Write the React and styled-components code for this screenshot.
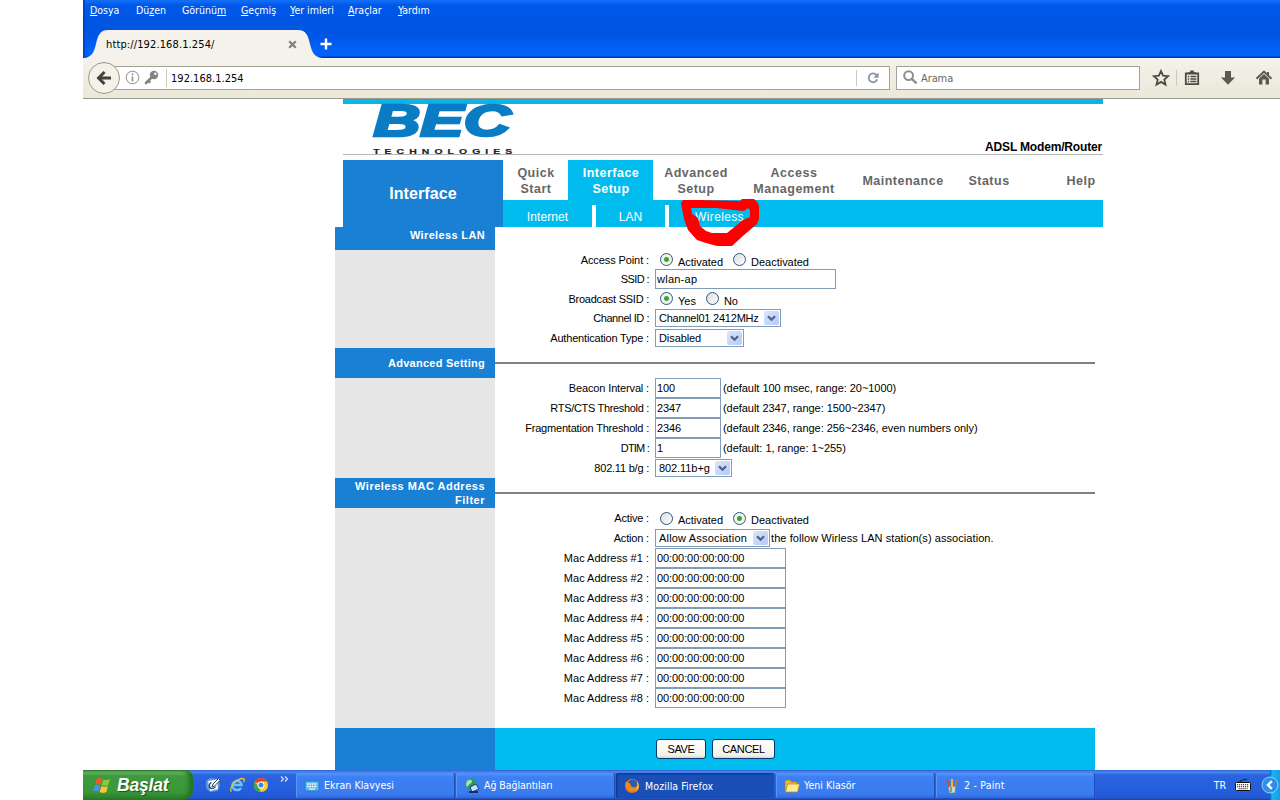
import React from 'react';
import styled, { createGlobalStyle } from 'styled-components';

const GlobalStyle = createGlobalStyle`
  * {
    box-sizing: border-box;
  }
  body {
    margin: 0;
    background: white;
    overflow: hidden;
  }
`;

const uiFont = '"DejaVu Sans Condensed", "DejaVu Sans", sans-serif';
const pageFont = '"Liberation Sans", Arial, sans-serif';

const Screen = styled.div`
  display: flex;
  flex-direction: column;
  width: 1197px;
  height: 800px;
  margin-left: 83px;
  overflow: hidden;
  font-family: ${pageFont};
  font-size: 11px;
  color: black;
`;

/* ---------- browser ---------- */

const TitleArea = styled.div`
  height: 58px;
  background: linear-gradient(to bottom, #1673fb 0, #0058ea 5px, #0055e3 22px, #0055e5 36px, #0064fb 52px, #0062f8 56px, #0037b0 57px, #0037b0 58px);
  box-shadow: inset 2px 0 1px #0046cc;
`;

const MenuBar = styled.div`
  display: flex;
  height: 30px;
  padding: 2px 0 0 7px;
`;

const MenuItem = styled.span`
  width: ${({ width }) => width}px;
  font-family: ${uiFont};
  font-size: 10.5px;
  line-height: 17px;
  letter-spacing: 0;
  color: white;
  white-space: nowrap;
  u {
    text-underline-offset: 1px;
  }
`;

const TabStrip = styled.div`
  display: flex;
  height: 28px;
  padding-left: 1px;
`;

const TabCurve = styled.svg`
  width: 24px;
  height: 28px;
  flex: none;
  transform: ${({ $flip }) => ($flip ? 'scaleX(-1)' : 'none')};
`;

const Tab = styled.div`
  display: flex;
  justify-content: space-between;
  align-items: center;
  width: 190px;
  height: 28px;
  background: #f4f2ea;
  font-family: ${uiFont};
  font-size: 11px;
  svg {
    flex: none;
    margin-right: 1px;
  }
`;

const TabTitle = styled.span`
  margin-left: -2px;
  letter-spacing: 0.12px;
`;

const NewTab = styled.div`
  display: flex;
  align-items: center;
  margin-left: -2px;
`;

const Toolbar = styled.div`
  display: flex;
  align-items: center;
  height: 41px;
  padding: 0 0 1px 5px;
  background: linear-gradient(to bottom, #f4f2ea, #ebe8d9);
  border-bottom: 1px solid #9c9a8c;
`;

const BackButton = styled.div`
  display: flex;
  align-items: center;
  justify-content: center;
  width: 32px;
  height: 32px;
  flex: none;
  border: 1px solid #9c998c;
  border-radius: 50%;
  background: #f3f1e8;
  z-index: 1;
`;

const Field = styled.div`
  display: flex;
  align-items: center;
  width: ${({ width }) => width}px;
  height: 24px;
  border: 1px solid #a5a395;
  background: white;
  font-family: ${uiFont};
  font-size: 11px;
`;

const AddressField = styled(Field)`
  margin-left: -8px;
  padding-left: 13px;
  border-left: none;
`;

const SearchField = styled(Field)`
  margin-left: 6px;
  padding-left: 6px;
  color: #666;
`;

const Divider = styled.span`
  width: 1px;
  height: ${({ height }) => height || 18}px;
  background: #ccc9bd;
`;

const AddressDivider = styled(Divider)`
  margin-left: 7px;
`;

const KeyIcon = styled.svg`
  width: 16px;
  height: 16px;
  margin-left: 3px;
`;

const AddressText = styled.span`
  flex: 1;
  margin-left: 4px;
  padding-top: 2px;
  letter-spacing: 0.02px;
`;

const ReloadIcon = styled.svg`
  width: 12px;
  height: 12px;
  margin: 0 10px;
`;

const SearchHint = styled.span`
  margin-left: 3px;
  padding-top: 2px;
  letter-spacing: -0.1px;
`;

const ToolIcons = styled.div`
  display: flex;
  align-items: center;
  margin-left: 12px;
`;

const ToolIcon = styled.svg`
  width: 18px;
  height: 18px;
  flex: none;
  margin-left: ${({ $gap }) => $gap || 0}px;
`;

const StarDivider = styled(Divider)`
  margin-left: 6px;
`;

/* ---------- router page ---------- */

const Page = styled.main`
  position: relative;
  height: 671px;
`;

const Banner = styled.div`
  display: flex;
  justify-content: space-between;
  align-items: flex-end;
  width: 760px;
  height: 56px;
  margin-left: 260px;
  border-top: 5px solid #0ab4e6;
  border-bottom: 1px solid #b5b5b5;
`;

const Logo = styled.svg`
  width: 150px;
  height: 51px;
  margin: 0 0 -1px 26px;
  overflow: visible;
`;

const Model = styled.div`
  padding: 0 1px 0 0;
  font-size: 12px;
  font-weight: bold;
  letter-spacing: -0.17px;
`;

const Navigation = styled.div`
  display: flex;
  width: 760px;
  height: 67px;
  margin: 5px 0 0 260px;
`;

const PageTitle = styled.div`
  width: 160px;
  background: #1a80d4;
  color: white;
  font-size: 16px;
  font-weight: bold;
  line-height: 67px;
  letter-spacing: 0.1px;
  text-align: center;
`;

const NavColumn = styled.div`
  flex: 1;
`;

const MainMenu = styled.div`
  display: flex;
  height: 40px;
`;

const MainMenuItem = styled.div`
  display: flex;
  align-items: center;
  justify-content: center;
  width: ${({ width }) => width}px;
  padding: 1px 0 0 1px;
  margin-left: ${({ last }) => (last ? 'auto' : 0)};
  background: ${({ active }) => (active ? '#00bbee' : 'white')};
  color: ${({ active }) => (active ? 'white' : '#666')};
  font-size: 12.5px;
  font-weight: bold;
  line-height: 16px;
  letter-spacing: 0.5px;
  text-align: center;
  white-space: pre-line;
`;

const SubMenu = styled.div`
  display: flex;
  align-items: flex-end;
  height: 27px;
  background: #00bbee;
`;

const SubMenuItem = styled.div`
  width: ${({ width }) => width}px;
  height: 22px;
  border-right: ${({ last }) => (last ? 'none' : '4px solid white')};
  color: white;
  font-size: 12px;
  line-height: 24px;
  letter-spacing: ${({ last }) => (last ? 0.35 : 0.1)}px;
  text-align: center;
`;

const Section = styled.section`
  display: flex;
  width: 760px;
  margin-left: 252px;
`;

const Side = styled.div`
  width: 160px;
  background: #e6e6e6;
`;

const SideTitle = styled.div`
  display: flex;
  align-items: center;
  justify-content: flex-end;
  height: ${({ height }) => height || 30}px;
  padding: ${({ height }) => (height ? '0 10px 7px 0' : '0 10px 0 0')};
  background: #1a80d4;
  color: white;
  font-weight: bold;
  line-height: 14px;
  letter-spacing: ${({ spacing }) => spacing || 0.25}px;
  text-align: right;
`;

const Body = styled.div`
  flex: 1;
`;

const Rule = styled.div`
  height: 30px;
  padding-top: 14px;
  &::after {
    content: '';
    display: block;
    height: 2px;
    background: #808080;
  }
`;

const Spacer = styled.div`
  height: ${({ height }) => height}px;
`;

const Row = styled.div`
  display: flex;
  align-items: center;
  height: ${({ height }) => height || 20}px;
`;

const Label = styled.label`
  width: 154px;
  margin-right: 6px;
  letter-spacing: ${({ spacing }) => spacing ?? -0.17}px;
  text-align: right;
  white-space: nowrap;
`;

const TextInput = styled.input`
  width: ${({ width }) => width}px;
  height: 20px;
  padding: 0 1px;
  border: 1px solid #7f9db9;
  border-radius: 0;
  outline: none;
  font-family: ${pageFont};
  font-size: 11px;
  letter-spacing: ${({ $spacing }) => $spacing ?? -0.08}px;
  color: black;
`;

const Hint = styled.span`
  margin-left: ${({ gap }) => gap || 2}px;
  letter-spacing: ${({ spacing }) => spacing ?? -0.04}px;
  white-space: nowrap;
`;

const SelectBox = styled.div`
  display: flex;
  align-items: center;
  justify-content: space-between;
  width: ${({ width }) => width}px;
  height: 18px;
  padding: 0 1px 0 3px;
  border: 1px solid #7f9db9;
  background: white;
  letter-spacing: ${({ spacing }) => spacing ?? -0.08}px;
  white-space: nowrap;
`;

const SelectArrow = styled.span`
  display: flex;
  align-items: center;
  justify-content: center;
  width: 15px;
  height: 14px;
  border-radius: 2px;
  background: linear-gradient(to bottom right, #dbe6fd, #b3c9f7);
`;

const Radio = styled.input`
  appearance: none;
  width: 13px;
  height: 13px;
  margin: 0 5px 0 ${({ $gap }) => $gap}px;
  border: 1px solid #2c5580;
  border-radius: 50%;
  background: linear-gradient(135deg, #dcdcd7, #ffffff);
  &:checked {
    background: radial-gradient(circle, #2fa52c 0, #36ab33 2px, #f3f3ef 3px);
  }
`;

const RadioText = styled.span`
  padding-top: 4px;
  letter-spacing: -0.02px;
`;

const Footer = styled.div`
  display: flex;
  width: 760px;
  height: 42px;
  margin-left: 252px;
  background: #00bbee;
`;

const FooterSide = styled.div`
  width: 160px;
  background: #1a80d4;
`;

const Actions = styled.div`
  display: flex;
  gap: 6px;
  padding: 11px 0 0 161px;
`;

const Button = styled.button`
  width: ${({ width }) => width}px;
  height: 20px;
  padding: 0;
  border: 1px solid #003c74;
  border-radius: 3px;
  background: linear-gradient(to bottom, #ffffff, #f2f1eb 85%, #dad5c9);
  font-family: ${pageFont};
  font-size: 11px;
  letter-spacing: -0.35px;
  color: black;
`;

const Scribble = styled.svg`
  position: absolute;
  left: 597px;
  top: 99px;
  width: 82px;
  height: 50px;
`;

/* ---------- taskbar ---------- */

const Taskbar = styled.div`
  display: flex;
  height: 30px;
  background: linear-gradient(to bottom, #2a5fd0 0, #4a8af0 2px, #2a64de 5px, #245cdb 24px, #2257d0 28px, #1941a5 30px);
`;

const StartButton = styled.div`
  display: flex;
  align-items: center;
  width: 110px;
  padding-left: 10px;
  border-radius: 0 8px 10px 0;
  background: linear-gradient(to bottom, #2f7a2f 0, #6dbb6a 2px, #3f9a3e 6px, #389838 22px, #2b7d2b 30px);
  box-shadow: inset -4px 0 5px #246f25;
`;

const StartText = styled.span`
  margin-left: 5px;
  color: white;
  font-size: 17.5px;
  font-style: italic;
  font-weight: bold;
  letter-spacing: -0.2px;
  text-shadow: 1px 1px 1px #1d4f1d;
`;

const QuickLaunch = styled.div`
  display: flex;
  align-items: center;
  gap: 8px;
  width: 103px;
  padding-left: 12px;
`;

const Chevrons = styled.svg`
  width: 9px;
  height: 6px;
  margin: -12px 0 0 3px;
`;

const Task = styled.div`
  display: flex;
  align-items: center;
  gap: 4px;
  width: 158px;
  height: 25px;
  margin: 3px 2px 0 0;
  padding-left: 8px;
  border-radius: 2px;
  background: ${({ active }) =>
    active ? '#1b4fb8' : 'linear-gradient(to bottom, #5a96f8 0, #3c80f3 4px, #3a7bf0 21px, #2f69da 25px)'};
  box-shadow: ${({ active }) => (active ? 'inset 1px 1px 2px #0e3385' : 'inset 1px 0 0 #5c96f7, 1px 0 0 #1f4fb8')};
  color: white;
  font-family: ${uiFont};
  font-size: 10.5px;
  letter-spacing: ${({ spacing }) => spacing ?? 0}px;
  white-space: nowrap;
`;

const TaskText = styled.span`
  margin: ${({ active }) => (active ? '1px 0 0 1px' : '-1px 0 0')};
`;

const Tray = styled.div`
  display: flex;
  align-items: center;
  margin-left: auto;
  color: white;
  font-family: ${uiFont};
  font-size: 10.5px;
`;

const TrayKeys = styled.svg`
  width: 16px;
  height: 14px;
  margin: 0 10px 0 9px;
`;

const TrayEdge = styled.div`
  display: flex;
  align-items: center;
  width: 19px;
  height: 30px;
  background: linear-gradient(to right, transparent 9px, #0c5fb8 9px, #18b5f2 11px, #149ce8);
`;

const menus = [
  { before: '', key: 'D', after: 'osya', width: 46 },
  { before: 'Dü', key: 'z', after: 'en', width: 46 },
  { before: 'Görünü', key: 'm', after: '', width: 59 },
  { before: '', key: 'G', after: 'eçmiş', width: 49 },
  { before: '', key: 'Y', after: 'er imleri', width: 58 },
  { before: '', key: 'A', after: 'raçlar', width: 50 },
  { before: '', key: 'Y', after: 'ardım', width: 50 },
];

const mainMenu = [
  { text: 'Quick\nStart', width: 65 },
  { text: 'Interface\nSetup', width: 85, active: true },
  { text: 'Advanced\nSetup', width: 85 },
  { text: 'Access\nManagement', width: 111 },
  { text: 'Maintenance', width: 107 },
  { text: 'Status', width: 65 },
  { text: 'Help', width: 45, last: true },
];

const thresholds = [
  { label: 'Beacon Interval :', value: '100', hint: '(default 100 msec, range: 20~1000)', spacing: -0.14 },
  { label: 'RTS/CTS Threshold :', value: '2347', hint: '(default 2347, range: 1500~2347)', spacing: -0.32 },
  { label: 'Fragmentation Threshold :', value: '2346', hint: '(default 2346, range: 256~2346, even numbers only)', spacing: -0.2 },
  { label: 'DTIM :', value: '1', hint: '(default: 1, range: 1~255)', spacing: -0.8 },
];

const macRows = [1, 2, 3, 4, 5, 6, 7, 8];

function Select({ width, spacing, children }) {
  return (
    <SelectBox width={width} spacing={spacing}>
      {children}
      <SelectArrow>
        <svg width="9" height="7" viewBox="0 0 9 7">
          <path d="M1 1.2l3.5 3.5L8 1.2" fill="none" stroke="#4d6185" strokeWidth="2.3" />
        </svg>
      </SelectArrow>
    </SelectBox>
  );
}

function RadioPair({ name, first, second, value }) {
  return (
    <>
      <Radio type="radio" name={name} $gap={5} defaultChecked={value === first} />
      <RadioText>{first}</RadioText>
      <Radio type="radio" name={name} $gap={10} defaultChecked={value === second} />
      <RadioText>{second}</RadioText>
    </>
  );
}

function Browser() {
  return (
    <>
      <TitleArea>
        <MenuBar>
          {menus.map((item) => (
            <MenuItem key={item.before + item.key + item.after} width={item.width}>
              {item.before}
              <u>{item.key}</u>
              {item.after}
            </MenuItem>
          ))}
        </MenuBar>
        <TabStrip>
          <TabCurve viewBox="0 0 24 28">
            <path d="M0 28C8 27 10 22 12 14C14 5 16 0 25 0V28Z" fill="#f4f2ea" />
          </TabCurve>
          <Tab>
            <TabTitle>http://192.168.1.254/</TabTitle>
            <svg width="9" height="9" viewBox="0 0 9 9">
              <path d="M1.2 1.2l6.6 6.6M7.8 1.2L1.2 7.8" stroke="#817f79" strokeWidth="2.2" />
            </svg>
          </Tab>
          <TabCurve viewBox="0 0 24 28" $flip>
            <path d="M0 28C8 27 10 22 12 14C14 5 16 0 25 0V28Z" fill="#f4f2ea" />
          </TabCurve>
          <NewTab>
            <svg width="12" height="12" viewBox="0 0 12 12">
              <path d="M6 0.5v11M0.5 6h11" stroke="#fff" strokeWidth="2.4" />
            </svg>
          </NewTab>
        </TabStrip>
      </TitleArea>
      <Toolbar>
        <BackButton>
          <svg width="16" height="16" viewBox="0 0 16 16">
            <path d="M8.5 2L2.6 8l5.9 6M3 8h12" fill="none" stroke="#44423c" strokeWidth="3" />
          </svg>
        </BackButton>
        <AddressField width={778}>
          <svg width="15" height="15" viewBox="0 0 15 15">
            <circle cx="7.5" cy="7.5" r="6.3" fill="none" stroke="#918f8a" />
            <path d="M7.5 3.4v1.8M7.5 6.4v5" stroke="#918f8a" strokeWidth="1.6" />
          </svg>
          <KeyIcon viewBox="0 0 16 16">
            <circle cx="11" cy="5" r="4.2" fill="#85837e" />
            <circle cx="12.3" cy="3.8" r="1.2" fill="#fff" />
            <path d="M8.6 7.4L3 13M5.2 10.8l1.2 1" stroke="#85837e" strokeWidth="2.6" strokeLinecap="round" />
          </KeyIcon>
          <AddressDivider />
          <AddressText>192.168.1.254</AddressText>
          <Divider height={16} />
          <ReloadIcon viewBox="0 0 12 12">
            <path d="M9.6 3.2A4.4 4.4 0 1 0 10.2 7.4" fill="none" stroke="#8d93a0" strokeWidth="1.8" />
            <path d="M11.6 0.4v5.4H6.4Z" fill="#8d93a0" />
          </ReloadIcon>
        </AddressField>
        <SearchField width={244}>
          <svg width="15" height="15" viewBox="0 0 15 15">
            <circle cx="5.6" cy="5.6" r="4.4" fill="none" stroke="#918f8d" strokeWidth="2" />
            <path d="M8.8 8.8l4.8 4.6" stroke="#918f8d" strokeWidth="2.4" />
          </svg>
          <SearchHint>Arama</SearchHint>
        </SearchField>
        <ToolIcons>
          <ToolIcon viewBox="0 0 18 18">
            <path d="M9 2l2.1 4.7 5.1.5-3.9 3.4 1.2 5L9 12.9l-4.5 2.7 1.2-5L1.8 7.2l5.1-.5Z" fill="none" stroke="#4c4a42" strokeWidth="1.8" />
          </ToolIcon>
          <StarDivider height={16} />
          <ToolIcon $gap={6} viewBox="0 0 18 18">
            <path d="M2.8 4.5h12.4v10.7H2.8Z" fill="none" stroke="#4c4a42" strokeWidth="1.8" />
            <path d="M5 5V3.2h2.2V1.5h3.6v1.7H13V5Z" fill="#4c4a42" />
            <path d="M4.8 7.5h1.4M7.4 7.5h6M4.8 10h1.4M7.4 10h6M4.8 12.5h1.4M7.4 12.5h6" stroke="#4c4a42" strokeWidth="1.3" />
          </ToolIcon>
          <ToolIcon $gap={18} viewBox="0 0 18 18">
            <path d="M6 2h6v6.5h4L9 15.8 2 8.5h4Z" fill="#5b5950" />
          </ToolIcon>
          <ToolIcon $gap={18} viewBox="0 0 18 18">
            <path d="M1.5 9.8L9 2.6l7.5 7.2" fill="none" stroke="#5b5950" strokeWidth="2" />
            <path d="M12 3h2v4h-2ZM4 9.8l5-4.8 5 4.8V15.5h-3.4v-5H7.4v5H4Z" fill="#5b5950" />
          </ToolIcon>
        </ToolIcons>
      </Toolbar>
    </>
  );
}

function RouterPage() {
  return (
    <Page>
      <Banner>
        <Logo viewBox="0 0 150 51">
          <text
            x="4.5"
            y="32"
            fill="#0a7cc4"
            stroke="#0a7cc4"
            strokeWidth="2.6"
            fontFamily="Liberation Sans"
            fontSize="44"
            fontWeight="bold"
            fontStyle="italic"
            textLength="137"
            lengthAdjust="spacingAndGlyphs"
          >
            BEC
          </text>
          <text
            x="3.2"
            y="50"
            transform="scale(1.3 1)"
            fill="#222"
            stroke="#222"
            strokeWidth="0.2"
            fontFamily="Liberation Sans"
            fontSize="8"
            fontWeight="bold"
            textLength="107"
          >
            TECHNOLOGIES
          </text>
        </Logo>
        <Model>ADSL Modem/Router</Model>
      </Banner>
      <Navigation>
        <PageTitle>Interface</PageTitle>
        <NavColumn>
          <MainMenu>
            {mainMenu.map((item) => (
              <MainMenuItem key={item.text} width={item.width} active={item.active} last={item.last}>
                {item.text}
              </MainMenuItem>
            ))}
          </MainMenu>
          <SubMenu>
            <SubMenuItem width={93}>Internet</SubMenuItem>
            <SubMenuItem width={73}>LAN</SubMenuItem>
            <SubMenuItem width={101} last>
              Wireless
            </SubMenuItem>
          </SubMenu>
        </NavColumn>
      </Navigation>

      <Section>
        <Side>
          <SideTitle height={23} spacing={0.35}>
            Wireless LAN
          </SideTitle>
        </Side>
        <Body>
          <Spacer height={23} />
          <Row height={19}>
            <Label spacing={-0.1}>Access Point :</Label>
            <RadioPair name="ap" first="Activated" second="Deactivated" value="Activated" />
          </Row>
          <Row>
            <Label spacing={-0.6}>SSID :</Label>
            <TextInput width={181} defaultValue="wlan-ap" $spacing={0.25} />
          </Row>
          <Row height={19}>
            <Label spacing={-0.24}>Broadcast SSID :</Label>
            <RadioPair name="ssid" first="Yes" second="No" value="Yes" />
          </Row>
          <Row>
            <Label spacing={-0.45}>Channel ID :</Label>
            <Select width={126} spacing={-0.22}>
              Channel01 2412MHz
            </Select>
          </Row>
          <Row>
            <Label spacing={-0.18}>Authentication Type :</Label>
            <Select width={89}>Disabled</Select>
          </Row>
        </Body>
      </Section>

      <Section>
        <Side>
          <SideTitle>Advanced Setting</SideTitle>
        </Side>
        <Body>
          <Rule />
          {thresholds.map((item) => (
            <Row key={item.label}>
              <Label spacing={item.spacing}>{item.label}</Label>
              <TextInput width={66} defaultValue={item.value} />
              <Hint>{item.hint}</Hint>
            </Row>
          ))}
          <Row>
            <Label spacing={-0.22}>802.11 b/g :</Label>
            <Select width={77}>802.11b+g</Select>
          </Row>
        </Body>
      </Section>

      <Section>
        <Side>
          <SideTitle spacing={0.5}>
            Wireless MAC Address
            <br />
            Filter
          </SideTitle>
        </Side>
        <Body>
          <Rule />
          <Row>
            <Label>Active :</Label>
            <RadioPair name="filter" first="Activated" second="Deactivated" value="Deactivated" />
          </Row>
          <Row>
            <Label>Action :</Label>
            <Select width={115} spacing={0.18}>
              Allow Association
            </Select>
            <Hint gap={1} spacing={0.07}>
              the follow Wirless LAN station(s) association.
            </Hint>
          </Row>
          {macRows.map((n) => (
            <Row key={n}>
              <Label spacing={0.01}>Mac Address #{n} :</Label>
              <TextInput width={131} defaultValue="00:00:00:00:00:00" />
            </Row>
          ))}
          <Spacer height={20} />
        </Body>
      </Section>

      <Footer>
        <FooterSide />
        <Actions>
          <Button width={50}>SAVE</Button>
          <Button width={63}>CANCEL</Button>
        </Actions>
      </Footer>

      <Scribble viewBox="680 198 82 50">
        <path
          fillRule="evenodd"
          fill="#ff0000"
          d="M681 203L683 200 698 200 740 201 742 199 754 199 758 203 759 207V219L757 224 744 235 732 246H717L706 243 697 240 688 230 684 219ZM691 208L692 214 698 218 700 226 706 231 712 233 727 233 743 220 750 217V210L748 208 744 211 734 210 716 208Z"
        />
      </Scribble>
    </Page>
  );
}

function StartMenu() {
  return (
    <StartButton>
      <svg width="19" height="18" viewBox="0 0 19 18">
        <path d="M3.5 3C5.5 1.5 7.5 1.7 9.2 2.7L7.6 8.6C6 7.6 4 7.5 1.9 8.7Z" fill="#f0592a" />
        <path d="M10.2 3.2c2 1.1 4 1.1 6.8-.2l-1.7 5.9c-2.3 1.3-4.3 1.2-6.7.1Z" fill="#8cc63f" />
        <path d="M1.6 9.7c2.1-1.2 4-1.1 5.7-.1L5.7 15.4c-1.7-1-3.5-1-5.7.2Z" fill="#4f8ff0" />
        <path d="M8.3 10c2.2 1.1 4.3 1.2 6.7 0l-1.7 5.9c-2.4 1.2-4.5 1.1-6.6 0Z" fill="#fbc52d" />
      </svg>
      <StartText>Başlat</StartText>
    </StartButton>
  );
}

function WindowsTaskbar() {
  return (
    <Taskbar>
      <StartMenu />
      <QuickLaunch>
        <svg width="16" height="16" viewBox="0 0 16 16">
          <path d="M1 4l4-3 9 1 1 6-2 6-8 1-4-4Z" fill="#5b9ade" />
          <path d="M3 4l9-1.500 1 9.500-8 2Z" fill="#f4f8ff" />
          <path d="M7 10l1-3 5.500-5.500 1.700 1.700L9.500 9Z" fill="#fff" stroke="#234" strokeWidth=".9" />
          <path d="M6.500 5.500C3.500 6.500 3.500 11.500 7 11.500c2 0 3-1 3.500-2" fill="none" stroke="#245" strokeWidth="1.200" />
        </svg>
        <svg width="16" height="16" viewBox="0 0 16 16">
          <path d="M12 10.8A4.6 4.6 0 1 1 12.6 8H5" fill="none" stroke="#65c4ff" strokeWidth="2.5" />
          <path d="M2.5 14.5C-1 12 7 1.5 14 1.5c2 .3 1.300 2.500.6 3.800" fill="none" stroke="#f2c12e" strokeWidth="1.3" />
        </svg>
        <svg width="16" height="16" viewBox="0 0 16 16">
          <circle cx="8" cy="8" r="7" fill="#f7cf2d" />
          <path d="M8 8L1.9 4.6A7 7 0 0 1 14.1 4.6H8Z" fill="#e2402f" />
          <path d="M1.9 4.6L5.2 9.8 8 15A7 7 0 0 1 1.9 4.6Z" fill="#36a852" />
          <circle cx="8" cy="8" r="3.4" fill="#fff" />
          <circle cx="8" cy="8" r="2.5" fill="#4284e4" />
        </svg>
        <Chevrons viewBox="0 0 9 6">
          <path d="M1 .5L3.500 3 1 5.500M5 .5L7.500 3 5 5.500" fill="none" stroke="#d5e3ff" strokeWidth="1.200" />
        </Chevrons>
      </QuickLaunch>
      <Task spacing={0.05}>
        <svg width="16" height="16" viewBox="0 0 16 16">
          <rect x="1" y="3" width="14" height="10" rx="1" fill="#5cb8ee" stroke="#277dc1" />
          <path d="M3 6h10M3 8.5h10" stroke="#fff" strokeWidth="1.4" strokeDasharray="1.6 .8" />
          <path d="M5 11h6" stroke="#fff" />
        </svg>
        <TaskText>Ekran Klavyesi</TaskText>
      </Task>
      <Task spacing={-0.05}>
        <svg width="16" height="16" viewBox="0 0 16 16">
          <circle cx="7" cy="6" r="5.5" fill="#2a9a58" />
          <path d="M3 3c2-2 4-1.500 5 0S5 6 4 8 1 7 3 3Z" fill="#a5e4a8" />
          <path d="M6 9l6-3 3 5-7 3Z" fill="#bfe0ff" stroke="#203c70" />
          <path d="M5 14h9" stroke="#182e5c" strokeWidth="2" />
        </svg>
        <TaskText>Ağ Bağlantıları</TaskText>
      </Task>
      <Task active spacing={0.1}>
        <svg width="16" height="16" viewBox="0 0 16 16">
          <circle cx="8" cy="8" r="7" fill="#e8701a" />
          <circle cx="8.5" cy="6.5" r="4.8" fill="#2b5caa" />
          <path d="M1.5 5C3 3 4 5 5.500 5.200S6 9 9 9.300s3-1 4-1.300c0 3-3 6-6 5.500S1 9 1.500 5Z" fill="#f08a1f" />
          <path d="M13 3c3 4 2 9-2 11 2-3 3-6 2-11Z" fill="#fbcf3a" />
        </svg>
        <TaskText active>Mozilla Firefox</TaskText>
      </Task>
      <Task spacing={0.05}>
        <svg width="16" height="16" viewBox="0 0 16 16">
          <path d="M1 3.5L2 2h4l1.5 2H13v9H1Z" fill="#e9b93c" stroke="#a47817" strokeWidth=".6" />
          <path d="M3.5 6H15.5L13.5 14H1.5Z" fill="#fdec8f" stroke="#b98f24" strokeWidth=".8" />
        </svg>
        <TaskText>Yeni Klasör</TaskText>
      </Task>
      <Task spacing={0.2}>
        <svg width="16" height="16" viewBox="0 0 16 16">
          <path d="M4 8h8l-1 7H5.5Z" fill="#c9d5df" stroke="#6c7c88" strokeWidth=".6" />
          <path d="M5.5 9L3 2" stroke="#d34b38" strokeWidth="2" />
          <path d="M8 9V1" stroke="#e5b83c" strokeWidth="2" />
          <path d="M10.5 9L13 2" stroke="#a97848" strokeWidth="2" />
          <path d="M7 9v5" stroke="#44a454" strokeWidth="1.5" />
        </svg>
        <TaskText>2 - Paint</TaskText>
      </Task>
      <Tray>
        TR
        <TrayKeys viewBox="0 0 16 14">
          <path d="M5 4c0-3 2 0 3-2s2 1 4-1" fill="none" stroke="#111" />
          <rect x=".5" y="4.5" width="15" height="8" rx="1" fill="#fff" stroke="#111" />
          <path d="M2 6.7h12M2 8.7h12M3.5 10.8h9" stroke="#111" strokeWidth="1.1" strokeDasharray="1.2 .8" />
        </TrayKeys>
        <TrayEdge>
          <svg width="18" height="18" viewBox="0 0 18 18">
            <circle cx="9" cy="9" r="8" fill="#2f8fe8" stroke="#8fd0ff" />
            <path d="M10.8 5.2L7 9l3.8 3.8" fill="none" stroke="#fff" strokeWidth="2.4" />
          </svg>
        </TrayEdge>
      </Tray>
    </Taskbar>
  );
}

function App() {
  return (
    <Screen>
      <GlobalStyle />
      <Browser />
      <RouterPage />
      <WindowsTaskbar />
    </Screen>
  );
}

export default App;
